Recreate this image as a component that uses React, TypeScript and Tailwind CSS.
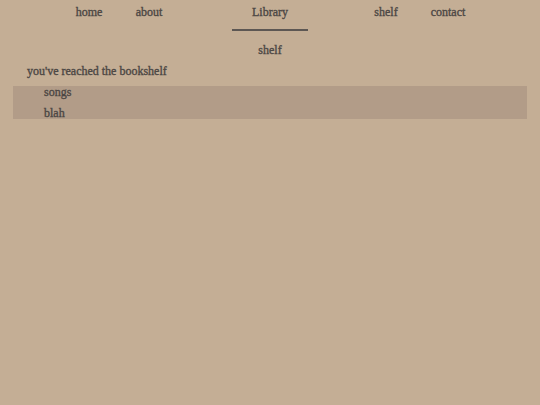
export default function App() {
  return (
    <main className="min-h-[405px] w-full bg-[#c4ae95] text-[#4c4744] text-[12px] font-['Liberation_Serif',serif] [-webkit-text-stroke:0.35px_#4c4744]">
      {/* Nav */}
      <nav className="flex h-[31px] items-start justify-center pt-[4px] pr-[1px]">
        <a className="w-[60px] text-center leading-[16px]">home</a>
        <a className="mr-[53px] w-[60px] text-center leading-[16px]">about</a>
        <div className="flex w-[76px] flex-col items-center">
          <a className="leading-[16px]">Library</a>
          <div className="mt-[9px] h-[2px] w-[76px] bg-[#5d5753]" />
        </div>
        <a className="ml-[48px] w-[60px] text-center leading-[16px]">shelf</a>
        <a className="w-[64px] text-center leading-[16px]">contact</a>
      </nav>

      <p className="mt-[11px] text-center leading-[16px]">shelf</p>

      <section className="px-[13px] pt-[5px]">
        <p className="pl-[14px] leading-[16px]">you've reached the bookshelf</p>
        <ul className="mt-[7px] flex flex-col gap-[9px] bg-[#b29c88] pl-[31px]">
          <li className="leading-[12px]">songs</li>
          <li className="leading-[12px]">blah</li>
        </ul>
      </section>
    </main>
  )
}
